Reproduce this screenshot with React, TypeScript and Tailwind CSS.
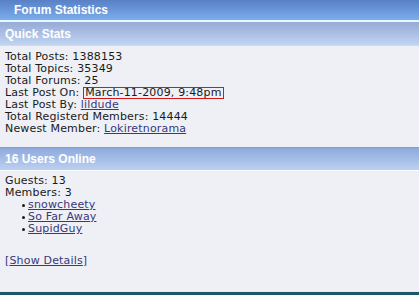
import React from "react";

const font = { fontFamily: '"DejaVu Sans", Verdana, sans-serif' };

function Link({ children }: { children: React.ReactNode }) {
  return <span className="text-[#38387a] underline underline-offset-[1px]">{children}</span>;
}

export default function App() {
  const members = ["snowcheety", "So Far Away", "SupidGuy"];
  return (
    <div className="w-[419px] h-[295px] bg-[#eef0f5] flex flex-col overflow-hidden">
      <div className="h-[20px] bg-gradient-to-b from-[#5880c6] to-[#7cadec] flex items-center pl-[14px]">
        <span className="text-white font-bold text-[12px] leading-none" style={{ fontFamily: '"Liberation Sans", Arial, sans-serif' }}>
          Forum Statistics
        </span>
      </div>
      <div className="h-[2px] bg-[#e6fbff]" />
      <div className="h-[23px] bg-gradient-to-b from-[#96aad6] to-[#c0d4f2] flex items-center pl-[5px]">
        <span className="text-white font-bold text-[12px] leading-none" style={{ fontFamily: '"Liberation Sans", Arial, sans-serif' }}>
          Quick Stats
        </span>
      </div>
      <div className="h-[1px] bg-[#d4dae6]" />
      <div className="pl-[5px] pt-[5px] text-[11px] leading-[12px] tracking-[0.17px] text-[#1a1a1a]" style={font}>
        <div>Total Posts: 1388153</div>
        <div>Total Topics: 35349</div>
        <div>Total Forums: 25</div>
        <div className="flex">
          <span>Last Post On:&nbsp;</span>
          <span className="border border-[#d41818] px-[1px] leading-[10px]">March-11-2009, 9:48pm</span>
        </div>
        <div>
          Last Post By: <Link>lildude</Link>
        </div>
        <div>Total Registerd Members: 14444</div>
        <div>
          Newest Member: <Link>Lokiretnorama</Link>
        </div>
      </div>
      <div className="mt-[12px] h-[23px] border-t border-[#8a9ec4] bg-gradient-to-b from-[#8eaadc] to-[#bcd0f0] flex items-center pl-[5px]">
        <span className="text-white font-bold text-[12px] leading-none" style={{ fontFamily: '"Liberation Sans", Arial, sans-serif' }}>
          16 Users Online
        </span>
      </div>
      <div className="h-[1px] bg-[#f8fcff]" />
      <div className="flex-1 pl-[5px] pt-[4px] text-[11px] leading-[12px] tracking-[0.17px] text-[#1a1a1a]" style={font}>
        <div>Guests: 13</div>
        <div>Members: 3</div>
        {members.map((m) => (
          <div key={m} className="flex items-center pl-[17px]">
            <span className="w-[3px] h-[3px] rounded-full bg-[#1a1a1a] mr-[3px]" />
            <Link>{m}</Link>
          </div>
        ))}
        <div className="mt-[20px] text-[#38387a]">
          [<span className="underline underline-offset-[1px]">Show Details</span>]
        </div>
      </div>
      <div className="h-[1px] bg-[#e4f0f0]" />
      <div className="h-[3px] bg-[#1c5868]" />
    </div>
  );
}
